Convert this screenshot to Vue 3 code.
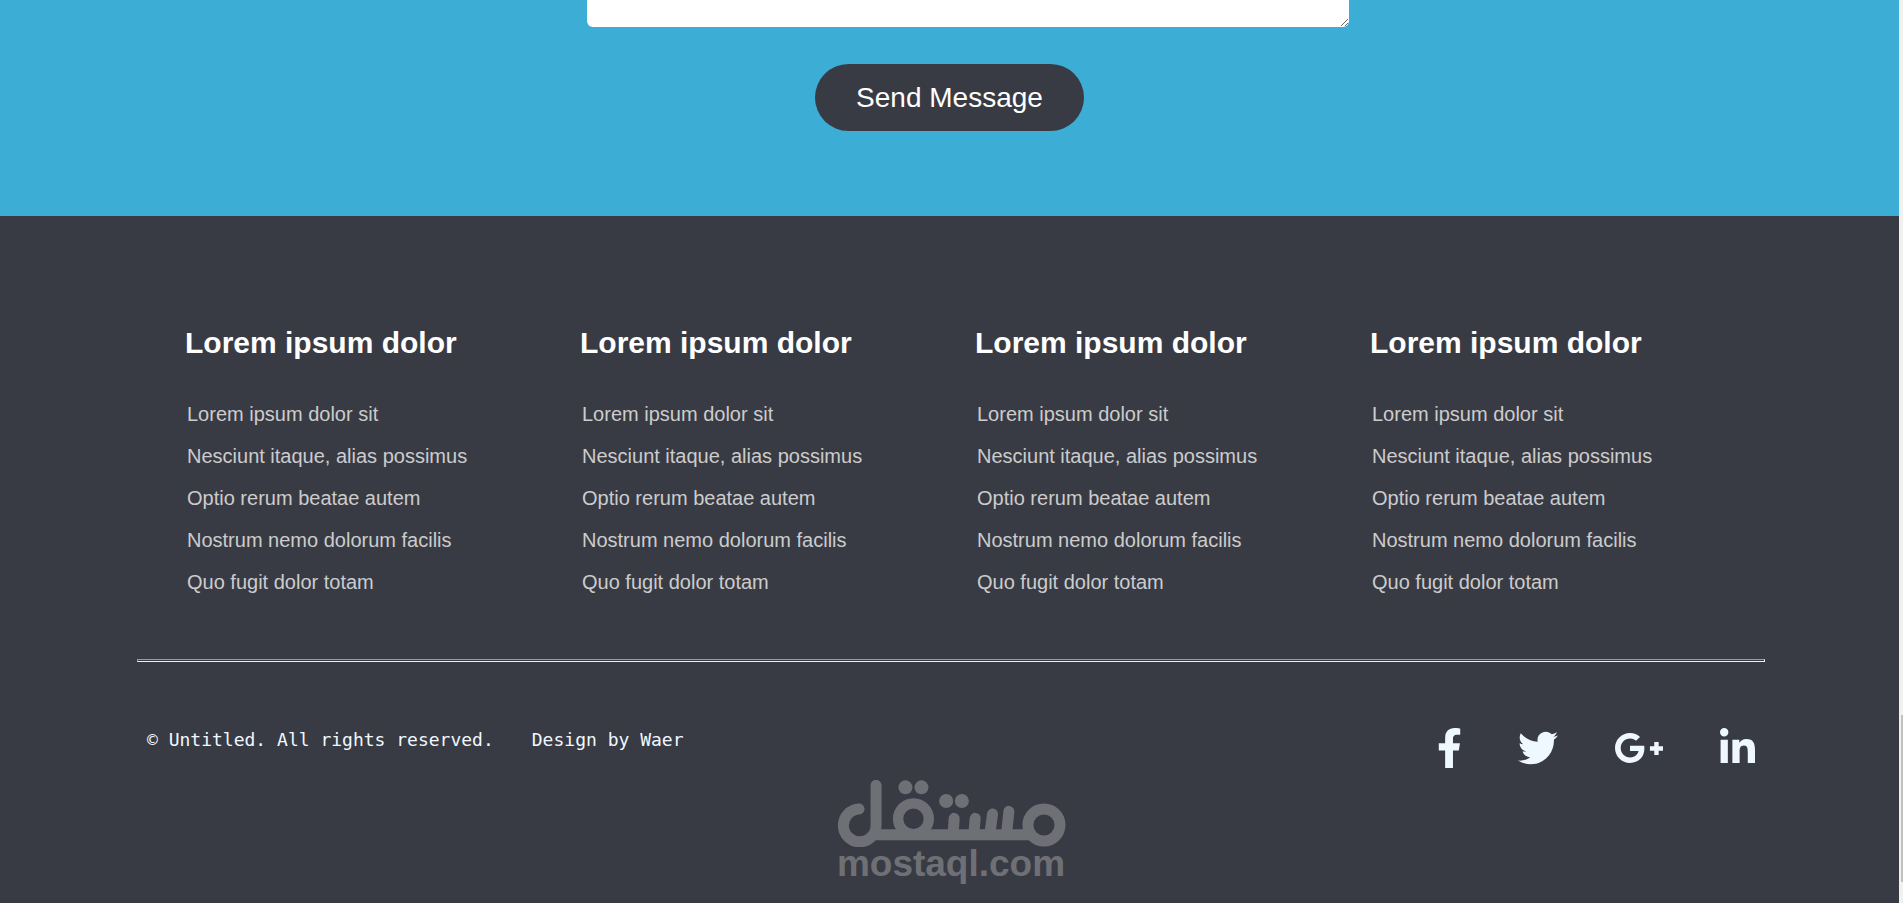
<template>
  <div class="page">
    <div class="content">
      <section class="contact">
        <form class="contact-form" @submit.prevent="sendMessage">
          <textarea v-model="message" class="message" aria-label="Message"></textarea>
          <button type="submit" class="send">Send Message</button>
        </form>
      </section>

      <footer class="footer">
        <div class="columns">
          <div v-for="n in 4" :key="n" class="column">
            <h2>Lorem ipsum dolor</h2>
            <ul>
              <li v-for="link in links" :key="link">
                <a href="#">{{ link }}</a>
              </li>
            </ul>
          </div>
        </div>

        <hr class="divider" />

        <div class="bottom">
          <p class="copyright">
            <span>© Untitled. All rights reserved.</span>
            <span>Design by Waer</span>
          </p>
          <nav class="social">
            <a v-for="icon in socials" :key="icon.name" href="#" :aria-label="icon.name">
              <svg :viewBox="`0 0 ${icon.width} 512`" height="40" fill="currentColor">
                <path :d="icon.path" />
              </svg>
            </a>
          </nav>
        </div>

        <div class="brand">
          <svg class="brand-mark" viewBox="50 30 686 202" fill="currentColor">
            <g fill="none" stroke="currentColor" stroke-width="33" stroke-linecap="round">
              <path d="M116 117A49 49 0 1 0 167 166V46" />
              <path d="M160 194H636" stroke-linecap="butt" />
              <circle cx="279" cy="146" r="46" stroke-width="31" />
              <path d="M401 145L398 190M464 145L460 190M516 132L508 190M565 124L558 190" />
              <circle cx="670" cy="165" r="48" />
            </g>
            <circle cx="255" cy="52" r="21" />
            <circle cx="303" cy="52" r="21" />
            <circle cx="377" cy="93" r="21" />
            <circle cx="424" cy="93" r="21" />
          </svg>
          <span class="brand-name">mostaql.com</span>
        </div>
      </footer>
    </div>
    <div class="scroll-track">
      <div class="scroll-thumb"></div>
    </div>
  </div>
</template>

<script setup>
import { ref } from 'vue';

const message = ref('');

const links = [
  'Lorem ipsum dolor sit',
  'Nesciunt itaque, alias possimus',
  'Optio rerum beatae autem',
  'Nostrum nemo dolorum facilis',
  'Quo fugit dolor totam',
];

const socials = [
  {
    name: 'Facebook',
    width: 320,
    path: 'M279.14 288l14.22-92.66h-88.91v-60.13c0-25.35 12.42-50.06 52.24-50.06h40.42V6.26S260.43 0 225.36 0c-73.22 0-121.08 44.38-121.08 124.72v70.62H22.89V288h81.39v224h100.17V288z',
  },
  {
    name: 'Twitter',
    width: 512,
    path: 'M459.37 151.716c.325 4.548.325 9.097.325 13.645 0 138.72-105.583 298.558-298.558 298.558-59.452 0-114.68-17.219-161.137-47.106 8.447.974 16.568 1.299 25.34 1.299 49.055 0 94.213-16.568 130.274-44.832-46.132-.975-84.792-31.188-98.112-72.772 6.498.974 12.995 1.624 19.818 1.624 9.421 0 18.843-1.3 27.614-3.573-48.081-9.747-84.143-51.98-84.143-102.985v-1.299c13.969 7.797 30.214 12.67 47.431 13.319-28.264-18.843-46.781-51.005-46.781-87.391 0-19.492 5.197-37.36 14.294-52.954 51.655 63.675 129.3 105.258 216.365 109.807-1.624-7.797-2.599-15.918-2.599-24.04 0-57.828 46.782-104.934 104.934-104.934 30.213 0 57.502 12.67 76.67 33.137 23.715-4.548 46.456-13.32 66.599-25.34-7.798 24.366-24.366 44.833-46.132 57.827 21.117-2.273 41.584-8.122 60.426-16.243-14.292 20.791-32.161 39.308-52.628 54.253z',
  },
  {
    name: 'Google Plus',
    width: 640,
    path: 'M386.061 228.496c1.834 9.692 3.143 19.384 3.143 31.956C389.204 370.205 315.599 448 204.8 448c-106.084 0-192-85.915-192-192s85.916-192 192-192c51.864 0 95.083 18.859 128.611 50.292l-52.126 50.03c-14.145-13.621-39.028-29.599-76.485-29.599-65.484 0-118.92 54.221-118.92 121.277 0 67.056 53.436 121.277 118.92 121.277 75.961 0 104.513-54.745 108.965-82.773H204.8v-66.009h181.261zm185.406 6.437V179.2h-56.001v55.733h-55.733v56.001h55.733v55.733h56.001v-55.733H627.2v-56.001h-55.733z',
  },
  {
    name: 'LinkedIn',
    width: 448,
    path: 'M100.28 448H7.4V148.9h92.88zM53.79 108.1C24.09 108.1 0 83.5 0 53.8a53.79 53.79 0 0 1 107.58 0c0 29.7-24.1 54.3-53.79 54.3zM447.9 448h-92.68V302.4c0-34.7-.7-79.2-48.29-79.2-48.29 0-55.69 37.7-55.69 76.7V448h-92.78V148.9h89.08v40.8h1.3c12.4-23.5 42.69-48.3 87.88-48.3 94 0 111.28 61.9 111.28 142.3V448z',
  },
];

const sendMessage = () => {
  message.value = '';
};
</script>

<style>
body {
  background: #393b44;
}
</style>

<style scoped>
.page {
  display: flex;
  min-height: 100vh;
  font-family: Arial, "Liberation Sans", sans-serif;
}
.content {
  flex: 1;
  display: flex;
  flex-direction: column;
}
.contact {
  background: #3cadd5;
  padding-bottom: 85px;
}
.contact-form {
  display: flex;
  flex-direction: column;
  align-items: center;
  gap: 37px;
}
.message {
  box-sizing: border-box;
  width: 100%;
  max-width: 762px;
  height: 27px;
  margin-left: 37px;
  border: none;
  border-radius: 0 0 6px 6px;
  background: #fff;
  resize: vertical;
  outline: none;
}
.send {
  height: 67px;
  padding: 0 41px;
  border: none;
  border-radius: 34px;
  background: #393b44;
  color: #fff;
  font-family: inherit;
  font-size: 28px;
  cursor: pointer;
}
.footer {
  flex: 1;
  padding: 110px 134px 0 137px;
  background: #393b44;
}
.columns {
  display: grid;
  grid-template-columns: repeat(4, 1fr);
  padding-left: 48px;
}
.column h2 {
  margin: 0 0 33px;
  color: #fff;
  font-size: 30px;
  line-height: 34px;
}
.column ul {
  margin: 0;
  padding: 0 0 0 2px;
  list-style: none;
}
.column li {
  font-size: 20px;
  line-height: 42px;
}
.column a {
  color: #ccc;
  text-decoration: none;
}
.divider {
  height: 1px;
  margin: 56px 0 66px;
  border: 1px solid;
  border-color: #9a9a9a #eee #eee #9a9a9a;
}
.bottom {
  display: flex;
  justify-content: space-between;
  padding: 0 10px;
  color: aliceblue;
}
.copyright {
  display: flex;
  gap: 38px;
  margin: 0;
  font-family: Consolas, "DejaVu Sans Mono", monospace;
  font-size: 18px;
  line-height: 24px;
}
.social {
  display: flex;
  gap: 56px;
}
.social a {
  display: flex;
  color: aliceblue;
}
.brand {
  display: flex;
  flex-direction: column;
  align-items: center;
  margin-top: 12px;
  color: #6f7076;
}
.brand-mark {
  width: 229px;
}
.brand-name {
  font-size: 37px;
  font-weight: bold;
  line-height: 34px;
}
.scroll-track {
  display: flex;
  flex-direction: column;
  justify-content: flex-end;
  width: 4px;
  background: #f1f1f1;
}
.scroll-thumb {
  height: 167px;
  margin: 0 0 21px 2px;
  background: #c1c1c1;
}
</style>
